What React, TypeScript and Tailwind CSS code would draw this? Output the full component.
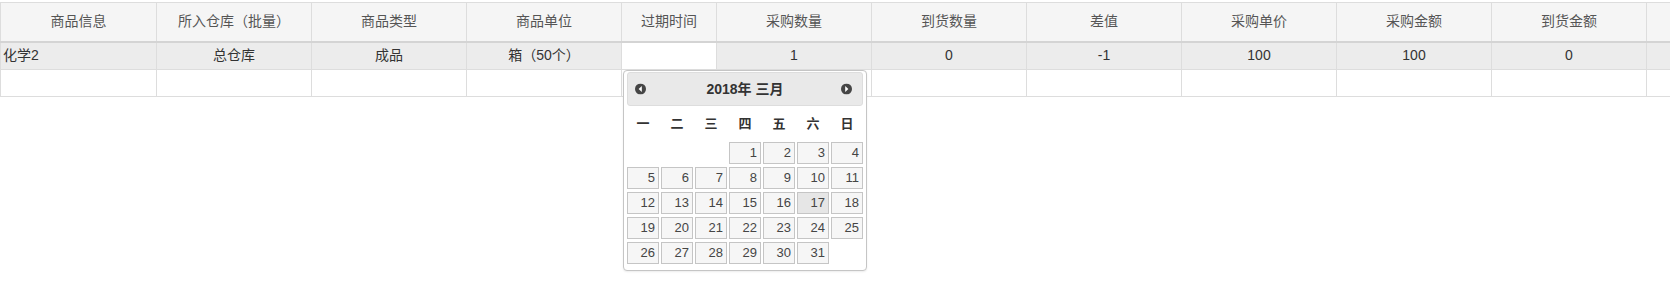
import React from "react";

const headers = [
  "商品信息",
  "所入仓库（批量）",
  "商品类型",
  "商品单位",
  "过期时间",
  "采购数量",
  "到货数量",
  "差值",
  "采购单价",
  "采购金额",
  "到货金额",
  "",
];

const widths = [
  "w-[156px]",
  "w-[155px]",
  "w-[155px]",
  "w-[155px]",
  "w-[95px]",
  "w-[155px]",
  "w-[155px]",
  "w-[155px]",
  "w-[155px]",
  "w-[155px]",
  "w-[155px]",
  "w-[150px]",
];

const row = ["化学2", "总仓库", "成品", "箱（50个）", "", "1", "0", "-1", "100", "100", "0", ""];

function CircleIcon({ dir }: { dir: "w" | "e" }) {
  return (
    <svg width="11" height="11" viewBox="0 0 11 11">
      <circle cx="5.5" cy="5.5" r="5.5" fill="#454545" />
      {dir === "w" ? (
        <polygon points="6.8,2.6 3.6,5.5 6.8,8.4" fill="#fff" />
      ) : (
        <polygon points="4.2,2.6 7.4,5.5 4.2,8.4" fill="#fff" />
      )}
    </svg>
  );
}

const days: (number | null)[] = [null, null, null, ...Array.from({ length: 31 }, (_, i) => i + 1)];
const weekdays = ["一", "二", "三", "四", "五", "六", "日"];

export default function App() {
  return (
    <div className="relative w-[1670px] h-[291px] overflow-hidden bg-white font-['Liberation_Sans','Noto_Sans_CJK_SC',sans-serif]">
      <table className="mt-[2px] border-collapse table-fixed w-[1796px] text-[14px]">
        <colgroup>
          {widths.map((w, i) => (
            <col key={i} className={w} />
          ))}
        </colgroup>
        <thead>
          <tr className="bg-[#f5f5f5]">
            {headers.map((h, i) => (
              <th
                key={i}
                className="h-[39px] border border-[#dddddd] border-b-2 border-b-[#d4d4d4] font-normal text-[#555] text-center align-middle p-0"
              >
                {h}
              </th>
            ))}
          </tr>
        </thead>
        <tbody>
          <tr className="bg-[#ececec]">
            {row.map((c, i) => (
              <td
                key={i}
                className={
                  "h-[28px] border border-[#dddddd] text-[#333] align-middle p-0 " +
                  (i === 0 ? "text-left pl-[2px] " : "text-center ") +
                  (i === 4 ? "bg-white" : "")
                }
              >
                {c}
              </td>
            ))}
          </tr>
          <tr className="bg-white">
            {row.map((_, i) => (
              <td key={i} className="h-[27px] border border-[#dddddd] p-0"></td>
            ))}
          </tr>
        </tbody>
      </table>

      <div className="absolute left-[623px] top-[70px] w-[244px] h-[201px] rounded-[4px] border border-[#c5c5c5] bg-white px-[3px] pt-[1px] shadow-[0_1px_2px_rgba(0,0,0,0.08)]">
        <div className="relative h-[34px] rounded-[3px] border border-[#dddddd] bg-[#e9e9e9] flex items-center justify-center text-[14px] font-bold text-[#333]">
          <span className="absolute left-[7px] top-1/2 -translate-y-1/2 flex">
            <CircleIcon dir="w" />
          </span>
          <span>2018年&nbsp;三月</span>
          <span className="absolute right-[10px] top-1/2 -translate-y-1/2 flex">
            <CircleIcon dir="e" />
          </span>
        </div>
        <div className="grid grid-cols-[repeat(7,32px)] gap-x-[2px] h-[36px] items-center">
          {weekdays.map((w) => (
            <div key={w} className="text-center text-[13px] font-bold text-[#333]">
              {w}
            </div>
          ))}
        </div>
        <div className="grid grid-cols-[repeat(7,32px)] gap-x-[2px] gap-y-[3px] auto-rows-[22px]">
          {days.map((d, i) =>
            d === null ? (
              <div key={i} />
            ) : (
              <div
                key={i}
                className={
                  "flex items-center justify-end pr-[3px] border border-[#c5c5c5] text-[13px] text-[#454545] " +
                  (d === 17 ? "bg-[#e6e6e6]" : "bg-[#f6f6f6]")
                }
              >
                {d}
              </div>
            )
          )}
        </div>
      </div>
    </div>
  );
}
